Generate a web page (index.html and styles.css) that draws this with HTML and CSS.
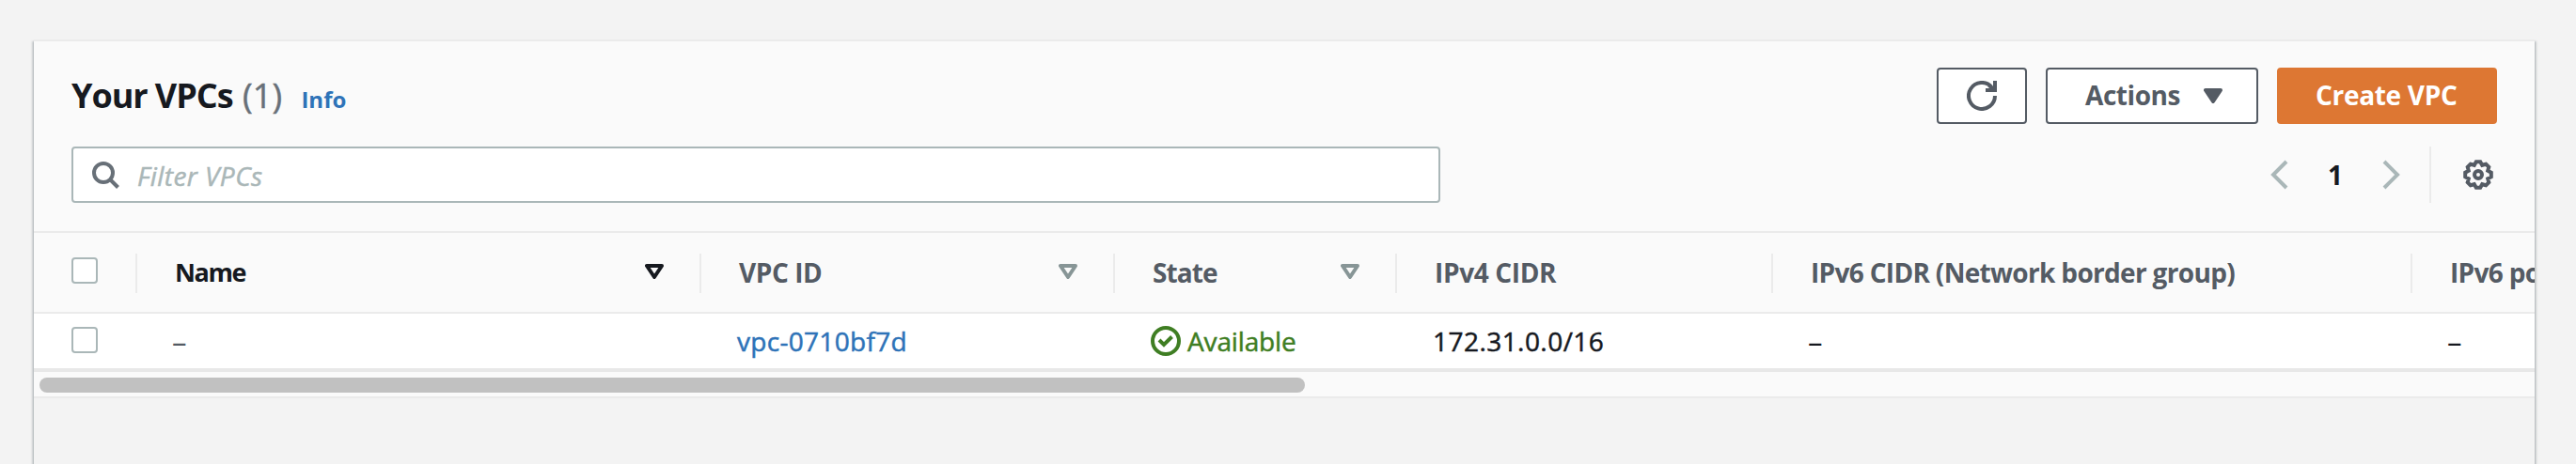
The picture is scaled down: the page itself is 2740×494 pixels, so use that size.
FILE: index.html
```
<!DOCTYPE html>
<html lang="en">
<head>
<meta charset="utf-8">
<title>Your VPCs</title>
<link rel="stylesheet" href="styles.css">
</head>
<body>
<main class="panel">
  <header class="toolbar">
    <div class="toolbar-row">
      <h1 class="title"><span class="title-name">Your VPCs</span> <span class="count">(1)</span></h1>
      <a class="info">Info</a>
      <div class="actions">
        <button class="btn btn-icon" aria-label="Refresh">
          <svg class="icon" viewBox="0 0 32 32"><path d="M30 16A14 14 0 1 1 26.500 6.700M30 0V10H20M23.500 4.500L29 10"/></svg>
        </button>
        <button class="btn btn-menu"><span class="label-actions">Actions</span>
          <svg class="caret" viewBox="0 0 20 16"><path class="solid" d="M2 2H18L10 14Z"/></svg>
        </button>
        <button class="btn btn-primary"><span class="label-create">Create VPC</span></button>
      </div>
    </div>
    <div class="filter-row">
      <div class="search">
        <svg class="icon" viewBox="0 0 32 32"><path d="M21 21L29.500 29.500"/><circle cx="14" cy="14" r="10"/></svg>
        <span class="placeholder">Filter VPCs</span>
      </div>
      <nav class="pager">
        <svg class="chevron" viewBox="0 0 20 32"><path d="M18 2L4 16L18 30"/></svg>
        <span class="page">1</span>
        <svg class="chevron" viewBox="0 0 20 32"><path d="M2 2L16 16L2 30"/></svg>
      </nav>
      <div class="settings">
        <svg class="icon" viewBox="-16 -16 32 32"><path d="M13.800-2.200L13.800 2.200L10.200 4.200L11.300 8.200L8.200 11.300L4.200 10.200L2.200 13.800L-2.200 13.800L-4.200 10.200L-8.200 11.300L-11.300 8.200L-10.200 4.200L-13.800 2.200L-13.800-2.200L-10.200-4.200L-11.300-8.200L-8.200-11.300L-4.200-10.200L-2.200-13.800L2.200-13.800L4.200-10.200L8.200-11.300L11.300-8.200L10.200-4.200Z"/><circle cx="0" cy="0" r="4"/></svg>
      </div>
    </div>
  </header>
  <section class="table">
    <div class="row head">
      <div class="cell"><span class="checkbox"></span></div>
      <div class="cell sorted"><span class="th-name">Name</span><svg class="sort" viewBox="0 0 20 16"><path d="M2 2H18L10 14Z"/></svg></div>
      <div class="cell"><span class="th-id">VPC ID</span><svg class="sort" viewBox="0 0 20 16"><path d="M2 2H18L10 14Z"/></svg></div>
      <div class="cell"><span class="th-state">State</span><svg class="sort" viewBox="0 0 20 16"><path d="M2 2H18L10 14Z"/></svg></div>
      <div class="cell"><span class="th-v4">IPv4 CIDR</span></div>
      <div class="cell"><span class="th-v6">IPv6 CIDR (Network border group)</span></div>
      <div class="cell"><span class="th-v6">IPv6 pool</span></div>
    </div>
    <div class="row body">
      <div class="cell"><span class="checkbox"></span></div>
      <div class="cell muted"><span class="dash">–</span></div>
      <div class="cell"><a class="vpc-link">vpc-0710bf7d</a></div>
      <div class="cell status"><svg class="icon" viewBox="0 0 32 32"><circle cx="16" cy="16" r="14"/><path d="M9 15L14 20L22.500 11.500"/></svg><span class="status-text">Available</span></div>
      <div class="cell"><span class="cidr">172.31.0.0/16</span></div>
      <div class="cell"><span class="dash">–</span></div>
      <div class="cell"><span class="dash">–</span></div>
    </div>
    <div class="scrollbar"><div class="thumb"></div></div>
  </section>
</main>
</body>
</html>
```
FILE: styles.css
```
* { box-sizing: border-box; }
body {
  margin: 0;
  height: 494px;
  overflow: hidden;
  padding: 42px 44px 0 36px;
  background: #f3f3f3;
  color: #16191f;
  font: 28px/36px "Open Sans", "Noto Sans", sans-serif;
}
.panel {
  height: 452px;
  background: #f3f3f3;
  border-top: 2px solid #ebebeb;
  box-shadow: 0 2px 2px rgba(0, 28, 36, .3), 2px 2px 2px rgba(0, 28, 36, .15), -2px 2px 2px rgba(0, 28, 36, .15);
}
.toolbar {
  height: 204px;
  padding: 28px 40px 0;
  display: flex;
  flex-direction: column;
  gap: 24px;
  background: #fafafa;
  border-bottom: 2px solid #ebebeb;
}
.toolbar-row, .filter-row { display: flex; align-items: center; height: 60px; }
svg { display: block; flex: none; fill: none; stroke: currentColor; stroke-width: 4; }
.icon { width: 32px; height: 32px; }
.title { margin: 0; font-size: 36px; line-height: 60px; white-space: pre; display: flex; }
.title-name { letter-spacing: -1.05px; width: 182px; }
.count { font-weight: 400; color: #687078; letter-spacing: .2px; }
.count, .placeholder, .vpc-link, .status-text, .cidr { -webkit-text-stroke: .5px currentColor; }
.info { margin: 8px 0 0 20px; color: #2e73b8; font-size: 24px; font-weight: 700; }
.actions { display: flex; gap: 20px; margin-left: auto; }
.btn {
  display: flex;
  align-items: center;
  height: 60px;
  padding: 0 38px 0 40px;
  border: 2px solid #545b64;
  border-radius: 4px;
  background: #fff;
  color: #545b64;
  font: 700 28px/36px "Open Sans", "Noto Sans", sans-serif;
}
.btn span { padding-bottom: 2px; white-space: nowrap; }
.btn-icon { width: 96px; padding: 0 30px; }
.btn-menu { width: 226px; justify-content: space-between; padding-right: 36px; }
.btn-primary { width: 234px; padding-left: 39px; background: #dd7733; border-color: #dd7733; color: #fff; }
.label-actions { letter-spacing: -.44px; }
.label-create { letter-spacing: -.31px; }
.caret, .sort { width: 20px; height: 16px; stroke-linejoin: round; }
.solid { fill: currentColor; }
.search {
  display: flex;
  align-items: center;
  width: 1456px;
  height: 60px;
  padding-left: 18px;
  gap: 18px;
  background: #fff;
  border: 2px solid #aab7b8;
  border-radius: 4px;
  color: #687078;
}
.placeholder { color: #aab7b8; font-style: italic; letter-spacing: .43px; padding-top: 1px; }
.pager { display: flex; align-items: center; margin-left: auto; color: #aab7b8; }
.chevron { width: 20px; height: 32px; }
.page { width: 100px; padding-left: 42px; color: #16191f; font-weight: 700; line-height: 34px; }
.settings {
  display: flex;
  align-items: center;
  width: 72px;
  height: 60px;
  margin-left: 30px;
  padding-left: 34px;
  border-left: 2px solid #ebebeb;
  color: #545b64;
}
.table { overflow: hidden; }
.row { display: grid; grid-template-columns: 110px 600px 440px 300px 400px 680px 400px; white-space: nowrap; }
.head { height: 86px; padding: 22px 0; background: #fafafa; border-bottom: 2px solid #ebebeb; color: #545b64; font-weight: 700; }
.cell { display: flex; align-items: center; padding: 0 40px; }
.head .cell { height: 42px; border-right: 2px solid #ebebeb; padding-right: 38px; line-height: 36px; }
.head .cell > span:not(.checkbox) { position: relative; top: -1px; }
.head .cell .checkbox { margin-bottom: 6px; }
.sorted { color: #16191f; }
.sort { margin-left: auto; margin-bottom: 4px; color: #879596; }
.sorted .sort { color: #16191f; }
.checkbox { flex: none; width: 28px; height: 28px; background: #fff; border: 2px solid #aab7b8; border-radius: 4px; }
.th-name { font-size: 27px; letter-spacing: -1.4px; }
.th-id { letter-spacing: -.43px; }
.th-state { letter-spacing: -.91px; }
.th-v4 { letter-spacing: -.36px; }
.th-v6 { letter-spacing: -.68px; }
.body { height: 62px; background: #fff; border-bottom: 4px solid #e8e8e8; }
.body .cell { padding-left: 38px; }
.body .cell:first-child { padding-left: 40px; padding-bottom: 2px; }
.muted { color: #545b64; }
.dash { font-size: 31px; margin-left: -1px; }
.vpc-link { color: #2e73b8; letter-spacing: .3px; }
.status { color: #3f7e23; gap: 7px; }
.status-text { letter-spacing: -.14px; }
.cidr { letter-spacing: .45px; }
.scrollbar { height: 28px; padding: 6px; background: #fafafa; border-bottom: 2px solid #ebebeb; }
.thumb { width: 1346px; height: 16px; border-radius: 8px; background: #c1c1c1; }
```
